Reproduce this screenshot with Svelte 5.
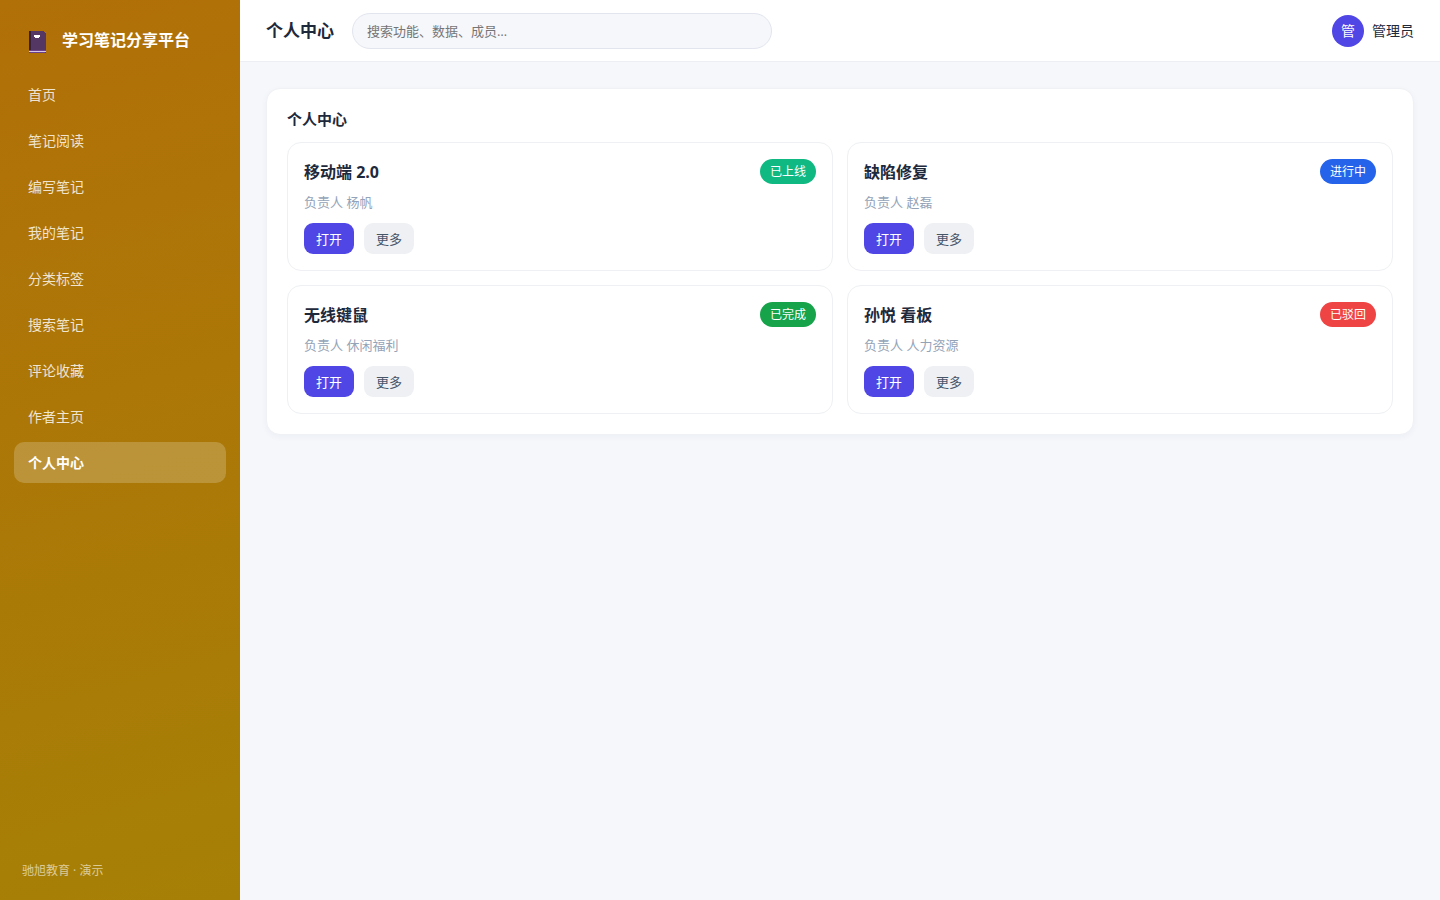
<script lang="ts">
  interface Project {
    title: string;
    owner: string;
    status: string;
    tone: "online" | "done" | "active" | "rejected";
  }

  const navItems = [
    "首页",
    "笔记阅读",
    "编写笔记",
    "我的笔记",
    "分类标签",
    "搜索笔记",
    "评论收藏",
    "作者主页",
    "个人中心",
  ];

  const projects: Project[] = [
    { title: "移动端 2.0", owner: "杨帆", status: "已上线", tone: "online" },
    { title: "缺陷修复", owner: "赵磊", status: "进行中", tone: "active" },
    { title: "无线键鼠", owner: "休闲福利", status: "已完成", tone: "done" },
    { title: "孙悦 看板", owner: "人力资源", status: "已驳回", tone: "rejected" },
  ];

  let current = $state("个人中心");
  let keyword = $state("");

  function select(event: MouseEvent, item: string): void {
    event.preventDefault();
    current = item;
  }
</script>

<div class="layout">
  <aside class="sidebar">
    <div class="brand">
      <svg class="logo" viewBox="0 -4 20 28" aria-hidden="true">
        <path d="M1 1h15v1h1v1h1v20H1z" fill="#553763" />
        <path d="M1 1h2v19H1z" fill="#35203f" />
        <path d="M1 20h17v2h-1v1H1z" fill="#69408c" />
        <path d="M1 21h17v1H1z" fill="#d9c6e6" />
        <path d="M6 5h6v2h-1v1H7V7H6z" fill="#fff" />
      </svg>
      <span>学习笔记分享平台</span>
    </div>

    <nav>
      {#each navItems as item}
        <a
          href="#{item}"
          class:active={item === current}
          aria-current={item === current ? "page" : undefined}
          onclick={(event) => select(event, item)}
        >
          {item}
        </a>
      {/each}
    </nav>

    <footer>驰旭教育 · 演示</footer>
  </aside>

  <div class="main">
    <header class="topbar">
      <h1>{current}</h1>
      <input
        type="search"
        aria-label="搜索"
        placeholder="搜索功能、数据、成员…"
        bind:value={keyword}
      />
      <div class="user">
        <span class="avatar">管</span>
        <span>管理员</span>
      </div>
    </header>

    <main>
      <section class="panel">
        <h2>{current}</h2>
        <div class="cards">
          {#each projects as project}
            <article class="card">
              <div class="card-head">
                <h3>{project.title}</h3>
                <span class="badge {project.tone}">{project.status}</span>
              </div>
              <p>负责人 {project.owner}</p>
              <div class="actions">
                <button type="button" class="primary">打开</button>
                <button type="button">更多</button>
              </div>
            </article>
          {/each}
        </div>
      </section>
    </main>
  </div>
</div>

<style>
  :global(body) {
    margin: 0;
    background: #f5f7fb;
  }

  .layout {
    display: flex;
    min-height: 100vh;
    color: #1e293b;
    font-family: "Open Sans", "Noto Sans CJK SC", sans-serif;
    font-size: 14px;
    line-height: 21px;
  }

  .layout * {
    box-sizing: border-box;
  }

  .sidebar {
    display: flex;
    flex-direction: column;
    flex: 0 0 240px;
    padding: 20px 14px;
    background: linear-gradient(165deg, #b17008, #a68006);
    color: #fff;
  }

  .brand {
    display: flex;
    align-items: center;
    gap: 14px;
    height: 40px;
    margin-bottom: 14px;
    padding-left: 14px;
    font-size: 16px;
    font-weight: 700;
  }

  .logo {
    width: 20px;
    height: 28px;
  }

  nav {
    display: flex;
    flex-direction: column;
    gap: 5px;
  }

  nav a {
    padding: 10px 14px;
    border-radius: 10px;
    color: rgba(255, 255, 255, 0.82);
    text-decoration: none;
  }

  nav a.active {
    background: rgba(255, 255, 255, 0.2);
    color: #fff;
    font-weight: 700;
  }

  footer {
    margin-top: auto;
    padding: 0 8px;
    color: rgba(255, 255, 255, 0.6);
    font-size: 12px;
    line-height: 18px;
  }

  .main {
    flex: 1;
    min-width: 0;
  }

  .topbar {
    display: flex;
    align-items: center;
    gap: 18px;
    height: 62px;
    padding: 0 26px;
    border-bottom: 1px solid #eceef3;
    background: #fff;
  }

  h1,
  h2,
  h3,
  p {
    margin: 0;
  }

  h1 {
    font-size: 17px;
    line-height: 26px;
    white-space: nowrap;
  }

  input {
    flex: 0 1 420px;
    min-width: 0;
    height: 36px;
    padding: 0 14px;
    border: 1px solid #e2e5ee;
    border-radius: 18px;
    outline: none;
    appearance: none;
    background: #f5f7fb;
    color: #1e293b;
    font-family: inherit;
    font-size: 13px;
  }

  input::placeholder {
    color: #757575;
  }

  .user {
    display: flex;
    align-items: center;
    gap: 8px;
    margin-left: auto;
    white-space: nowrap;
  }

  .avatar {
    display: grid;
    place-items: center;
    width: 32px;
    height: 32px;
    border-radius: 50%;
    background: #4f46e5;
    color: #fff;
  }

  main {
    padding: 26px;
  }

  .panel {
    padding: 20px;
    border: 1px solid #eff1f5;
    border-radius: 14px;
    background: #fff;
    box-shadow: 0 2px 6px rgba(30, 41, 90, 0.04);
  }

  h2 {
    margin-bottom: 13px;
    font-size: 15px;
    line-height: 20px;
  }

  .cards {
    display: grid;
    grid-template-columns: repeat(2, minmax(0, 1fr));
    gap: 14px;
  }

  .card {
    padding: 16px;
    border: 1px solid #eef0f3;
    border-radius: 14px;
  }

  .card-head {
    display: flex;
    align-items: center;
    justify-content: space-between;
  }

  h3 {
    font-size: 16px;
    line-height: 24px;
  }

  .badge {
    padding: 3px 10px;
    border-radius: 13px;
    color: #fff;
    font-size: 12px;
    line-height: 19px;
  }

  .online {
    background: #10b981;
  }

  .active.badge {
    background: #2563eb;
  }

  .done {
    background: #16a34a;
  }

  .rejected {
    background: #ef4444;
  }

  .card p {
    margin: 8px 0 11px;
    color: #94a3b8;
    font-size: 13px;
    line-height: 20px;
  }

  .actions {
    display: flex;
    gap: 10px;
  }

  button {
    height: 31px;
    padding: 0 12px;
    border: 0;
    border-radius: 9px;
    background: #eef0f4;
    color: #475569;
    font-family: inherit;
    font-size: 13px;
    cursor: pointer;
  }

  button.primary {
    background: #4f46e5;
    color: #fff;
  }
</style>
